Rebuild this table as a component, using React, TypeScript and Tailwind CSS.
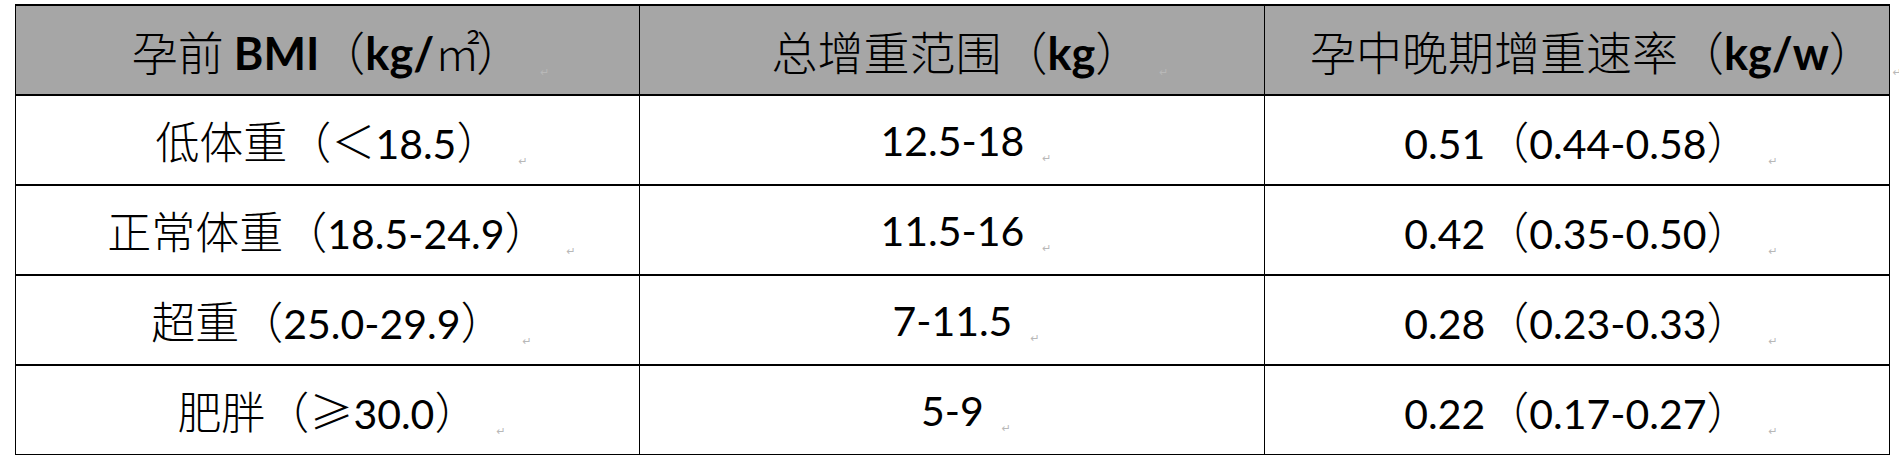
import React from 'react';

const cjk = "font-['Noto_Sans_CJK_SC',sans-serif]";
const latin = "font-['Lato','Noto_Sans_CJK_SC',sans-serif]";

type Part = { t: string; latin?: boolean; bold?: boolean; tight?: boolean };

const header: Part[][] = [
  [{ t: '孕前 ' }, { t: 'BMI', latin: true, bold: true }, { t: '（' }, { t: 'kg/', latin: true, bold: true }, { t: '㎡', tight: true }, { t: '）' }],
  [{ t: '总增重范围（' }, { t: 'kg', latin: true, bold: true }, { t: '）' }],
  [{ t: '孕中晚期增重速率（' }, { t: 'kg/w', latin: true, bold: true }, { t: '）' }],
];
const headPad = ['pl-[26px]', 'pl-[36px]', 'pl-[58px]'];

const rows: Part[][][] = [
  [
    [{ t: '低体重（＜' }, { t: '18.5', latin: true }, { t: '）' }],
    [{ t: '12.5-18', latin: true }],
    [{ t: '0.51', latin: true }, { t: '（' }, { t: '0.44-0.58', latin: true }, { t: '）' }],
  ],
  [
    [{ t: '正常体重（' }, { t: '18.5-24.9', latin: true }, { t: '）' }],
    [{ t: '11.5-16', latin: true }],
    [{ t: '0.42', latin: true }, { t: '（' }, { t: '0.35-0.50', latin: true }, { t: '）' }],
  ],
  [
    [{ t: '超重（' }, { t: '25.0-29.9', latin: true }, { t: '）' }],
    [{ t: '7-11.5', latin: true }],
    [{ t: '0.28', latin: true }, { t: '（' }, { t: '0.23-0.33', latin: true }, { t: '）' }],
  ],
  [
    [{ t: '肥胖（≥' }, { t: '30.0', latin: true }, { t: '）' }],
    [{ t: '5-9', latin: true }],
    [{ t: '0.22', latin: true }, { t: '（' }, { t: '0.17-0.27', latin: true }, { t: '）' }],
  ],
];

const Cell: React.FC<{ parts: Part[]; last?: boolean; head?: boolean; pad: string }> = ({ parts, last, head, pad }) => (
  <div className={`flex items-center justify-center pt-[4px] ${pad} ${last ? '' : 'border-r border-black'}`}>
    <span className="whitespace-pre text-black leading-none">
      {parts.map((p, i) =>
        p.latin ? (
          <span
            key={i}
            className={`${latin} ${head ? 'text-[45px]' : 'text-[41px]'} ${p.bold ? 'font-bold' : 'font-normal'}`}
          >
            {p.t}
          </span>
        ) : (
          <span
            key={i}
            className={`${cjk} ${head ? 'text-[46px]' : 'text-[44px]'} font-light ${p.tight ? 'tracking-[-4px]' : ''}`}
          >
            {p.t}
          </span>
        )
      )}
      <span className="ml-[18px] align-[-6px] text-[11px] text-[#b8b8b8] font-['DejaVu_Sans',sans-serif]">↵</span>
    </span>
  </div>
);

const App: React.FC = () => {
  return (
    <div className="w-[1899px] h-[465px] bg-white pl-[15px] pt-[4px]">
      <div className="w-[1875px] border-x border-t-2 border-b border-black">
        <div className="grid grid-cols-[624px_625px_624px] h-[90px] bg-[#a6a6a6] border-b-2 border-black">
          {header.map((h, i) => (
            <Cell key={i} parts={h} last={i === 2} head pad={headPad[i]} />
          ))}
        </div>
        {rows.map((r, ri) => (
          <div
            key={ri}
            className={`grid grid-cols-[624px_625px_624px] ${ri === 3 ? 'h-[88px]' : 'h-[90px] border-b-2 border-black'}`}
          >
            {r.map((c, ci) => (
              <Cell key={ci} parts={c} last={ci === 2} pad="pl-[28px]" />
            ))}
          </div>
        ))}
      </div>
    </div>
  );
};

export default App;
